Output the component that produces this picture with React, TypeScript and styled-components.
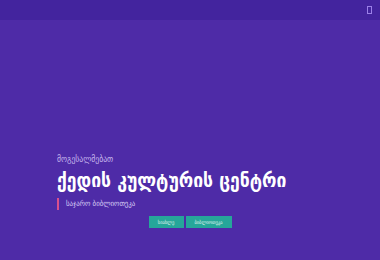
import styled, { createGlobalStyle } from 'styled-components';

const Global = createGlobalStyle`
  html, body {
    margin: 0;
    padding: 0;
    background: #4e2ba7;
  }
  body {
    font-family: "DejaVu Sans", "Noto Sans", sans-serif;
    font-stretch: condensed;
  }
`;

const Page = styled.div`
  width: 380px;
  height: 260px;
  display: flex;
  flex-direction: column;
  background: #4e2ba7;
  overflow: hidden;
`;

const TopBar = styled.header`
  height: 20px;
  flex: 0 0 auto;
  display: flex;
  align-items: center;
  justify-content: flex-end;
  padding: 0 8px;
  background: #43249e;
`;

const MenuIcon = styled.span`
  display: block;
  width: 3px;
  height: 6px;
  border: 1px solid #9b80e8;
`;

const Hero = styled.section`
  flex: 1;
  display: flex;
  flex-direction: column;
  justify-content: flex-end;
  padding: 0 57px 32px;
`;

const Welcome = styled.p`
  margin: 0 0 5px;
  font-size: 8.5px;
  color: #c7b9ee;
`;

const Title = styled.h1`
  margin: 0 0 6px;
  font-size: 19.5px;
  font-weight: bold;
  color: #ffffff;
  white-space: nowrap;
`;

const Subtitle = styled.p`
  margin: 0 0 6px;
  padding-left: 7px;
  border-left: 2px solid #d9508c;
  font-size: 7.6px;
  line-height: 12px;
  color: #d8cdf5;
`;

const Actions = styled.div`
  display: flex;
  justify-content: center;
  gap: 2px;
  margin-left: -57px;
  margin-right: -57px;
`;

const Button = styled.a<{ $wide?: boolean }>`
  display: flex;
  align-items: center;
  justify-content: center;
  height: 12px;
  width: ${(p) => (p.$wide ? '46px' : '35px')};
  background: #26a69a;
  color: #e0f5f2;
  font-size: 5px;
  text-decoration: none;
`;

export default function App() {
  return (
    <Page>
      <Global />
      <TopBar>
        <MenuIcon />
      </TopBar>
      <Hero>
        <Welcome>მოგესალმებათ</Welcome>
        <Title>ქედის კულტურის ცენტრი</Title>
        <Subtitle>საჯარო ბიბლიოთეკა</Subtitle>
        <Actions>
          <Button href="#">სიახლე</Button>
          <Button href="#" $wide>
            ბიბლიოთეკა
          </Button>
        </Actions>
      </Hero>
    </Page>
  );
}
